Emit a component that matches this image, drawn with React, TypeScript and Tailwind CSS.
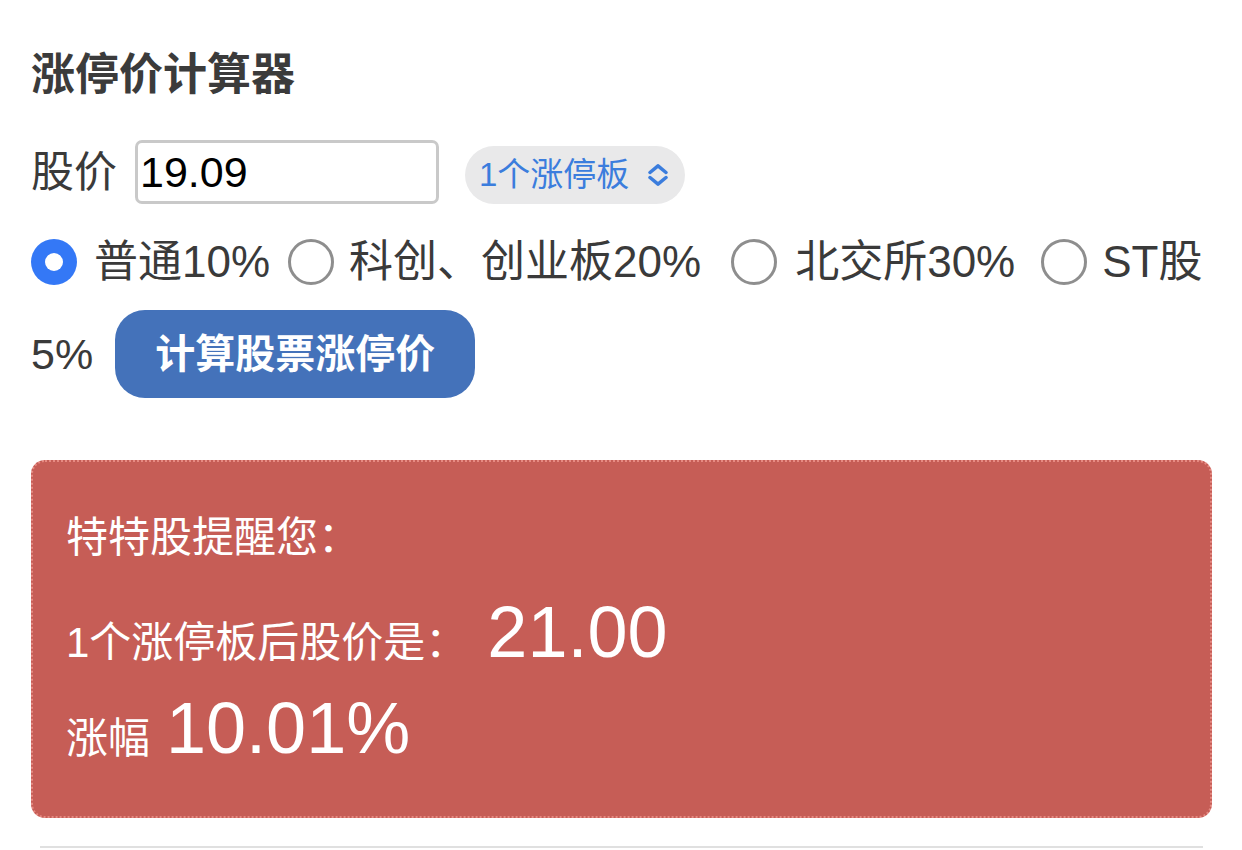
import React from 'react';

function Radio({ checked, className = '' }: { checked?: boolean; className?: string }) {
  if (checked) {
    return (
      <span className={`flex h-[46px] w-[46px] shrink-0 items-center justify-center rounded-full bg-[#3478f6] ${className}`}>
        <span className="h-[18px] w-[18px] rounded-full bg-white" />
      </span>
    );
  }
  return <span className={`block h-[46px] w-[46px] shrink-0 rounded-full border-[3px] border-[#8e8e8e] bg-white ${className}`} />;
}

function UpDown() {
  return (
    <svg width="22" height="22" viewBox="0 0 22 22" fill="none" stroke="#3b7ddd" strokeWidth="3.5" strokeLinecap="round" strokeLinejoin="round">
      <path d="M3 8.5 L11 1.8 L19 8.5" />
      <path d="M3 13.5 L11 20.2 L19 13.5" />
    </svg>
  );
}

export default function App() {
  return (
    <div className="h-[850px] overflow-hidden bg-white font-[family-name:'Liberation_Sans','Noto_Sans_CJK_SC',sans-serif] text-[43px] text-[#3a3a3a]">
      <div className="pl-[31px] pr-[30px]">
        {/* Title */}
        <h3 className="mt-[45px] h-[60px] text-[44px] font-bold leading-[60px] text-[#3b3b3b]">涨停价计算器</h3>

        {/* Price input */}
        <div className="mt-[32px] flex h-[70px] items-center">
          <span className="leading-none">股价</span>
          <div className="ml-[18px] flex h-[64px] w-[304px] items-center rounded-[7px] border-[3px] border-[#c9c9c9] pl-[2px] text-black">
            19.09
          </div>
          <div className="ml-[26px] mt-[6px] flex h-[58px] items-center gap-[18px] rounded-full bg-[#e9e9ea] pl-[14px] pr-[16px] text-[33px] text-[#3b7ddd]">
            <span>1个涨停板</span>
            <UpDown />
          </div>
        </div>

        {/* Board type */}
        <div className="mt-[9px]">
          <div className="flex h-[92px] items-center whitespace-nowrap text-[44px]">
            <Radio checked />
            <span className="ml-[17px]">普通10%</span>
            <Radio className="ml-[18px]" />
            <span className="ml-[15px]">科创、创业板20%</span>
            <Radio className="ml-[30px]" />
            <span className="ml-[18px]">北交所30%</span>
            <Radio className="ml-[26px]" />
            <span className="ml-[15px]">ST股</span>
          </div>
          <div className="flex h-[92px] items-center">
            <span>5%</span>
            <button className="ml-[22px] h-[88px] rounded-[30px] bg-[#4472ba] px-[40px] text-[40px] font-bold text-white">
              计算股票涨停价
            </button>
          </div>
        </div>

        {/* Result */}
        <div className="mt-[60px] rounded-[14px] border-2 border-dotted border-[#e68a82] bg-[#c65d56] pb-[39px] pl-[33px] pt-[27px] text-[42px] text-white">
          <div className="flex h-[96px] items-center">特特股提醒您：</div>
          <div className="flex h-[94px] items-center">
            <p className="flex items-baseline">
              <span>1个涨停板后股价是：</span>
              <span className="ml-[20px] text-[72px]">21.00</span>
            </p>
          </div>
          <div className="flex h-[98px] items-center">
            <p className="flex items-baseline">
              <span>涨幅</span>
              <span className="ml-[16px] text-[72px]">10.01%</span>
            </p>
          </div>
        </div>

        <hr className="mx-[9px] mt-[28px] border-t-2 border-[#e0e0e0]" />
      </div>
    </div>
  );
}
